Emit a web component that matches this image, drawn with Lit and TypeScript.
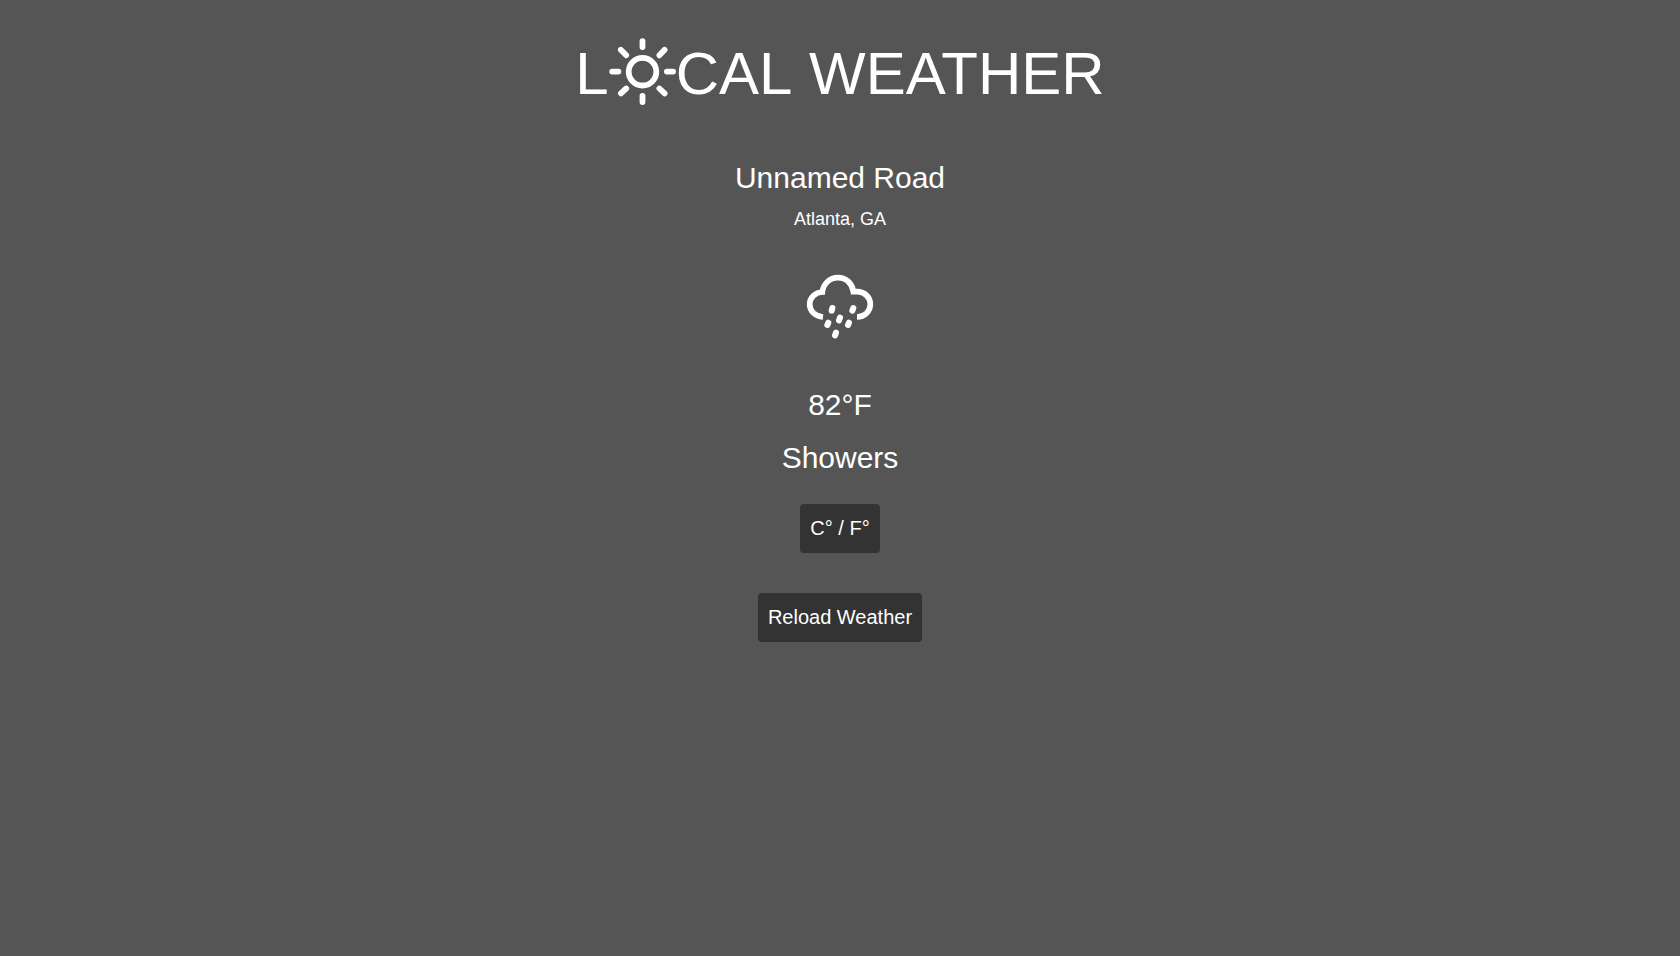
import { LitElement, html, css } from "lit";
import { customElement, state } from "lit/decorators.js";

@customElement("app-root")
export class AppRoot extends LitElement {
  static styles = css`
    :host {
      display: block;
      box-sizing: border-box;
      min-height: 100vh;
      padding: 38px 16px;
      background: #555;
      color: #fff;
      font-family: "Liberation Sans", Arial, sans-serif;
    }
    main {
      display: flex;
      flex-direction: column;
      align-items: center;
      text-align: center;
    }
    h1,
    h2,
    p {
      margin: 0;
      font-weight: 400;
    }
    h1 {
      display: flex;
      align-items: flex-start;
      justify-content: center;
      font-size: 60px;
      line-height: 72px;
    }
    .word {
      display: inline-block;
    }
    svg {
      display: block;
      flex: none;
      fill: none;
      stroke: #fff;
      stroke-linecap: round;
    }
    .sun {
      width: 67px;
      height: 67px;
      stroke-width: 5.8;
    }
    .place {
      margin-top: 51px;
    }
    h2,
    .reading {
      font-size: 30px;
      line-height: 33px;
    }
    .city {
      margin-top: 15px;
      font-size: 18px;
      line-height: 20px;
    }
    .rain {
      width: 68px;
      height: 66px;
      margin: 45px 0 48px;
      stroke-width: 18;
    }
    .cloud {
      stroke-width: 17;
      stroke-linecap: butt;
    }
    .summary {
      margin-top: 20px;
    }
    button {
      margin: 0;
      padding: 10px;
      border: 0;
      border-radius: 4px;
      background: #333;
      color: #fff;
      font: inherit;
      font-size: 20px;
      line-height: 29px;
      cursor: pointer;
    }
    .actions {
      display: flex;
      flex-direction: column;
      align-items: center;
      gap: 40px;
      margin-top: 30px;
    }
  `;

  @state() private celsius = false;

  private fahrenheit = 82;

  private toggleUnit() {
    this.celsius = !this.celsius;
  }

  private reload() {
    this.celsius = false;
  }

  render() {
    const reading = this.celsius
      ? `${Math.round(((this.fahrenheit - 32) * 5) / 9)}°C`
      : `${this.fahrenheit}°F`;
    return html`
      <main>
        <h1>
          <span>L</span>
          <svg class="sun" viewBox="0 0 67 67" aria-hidden="true">
            <circle cx="33.5" cy="33.7" r="13.8" />
            <path
              d="M33.5 3.1v6M33.5 58v6M3.2 33.6h6.2M57.9 33.6h6.2M11.8 11.8l5.4 5.5M55.6 11.8l-5.2 5.5M11.9 55.4l5.3-4.9M55.6 55.4l-5.2-4.9"
            />
          </svg>
          <span><span class="word">CAL</span> <span class="word">WEATHER</span></span>
        </h1>
        <h2 class="place">Unnamed Road</h2>
        <p class="city">Atlanta, GA</p>
        <svg class="rain" viewBox="30 30 204 198" role="img" aria-label="Showers">
          <path
            class="cloud"
            d="M81 159C58 157 41 142 41 121C41 101 58 85 79 84C82 59 101 41 126 41C151 41 169 59 172 83H184C206 83 223 100 223 121C223 142 206 159 183 159"
          />
          <path
            d="M109 132l-2 8M172 132l-3 8M132 161l-3 8M97 176l-3 7M159 176l-3 7M120 206l-3 8"
          />
        </svg>
        <p class="reading">${reading}</p>
        <p class="reading summary">Showers</p>
        <div class="actions">
          <button type="button" @click=${this.toggleUnit}>C° / F°</button>
          <button type="button" @click=${this.reload}>Reload Weather</button>
        </div>
      </main>
    `;
  }
}
